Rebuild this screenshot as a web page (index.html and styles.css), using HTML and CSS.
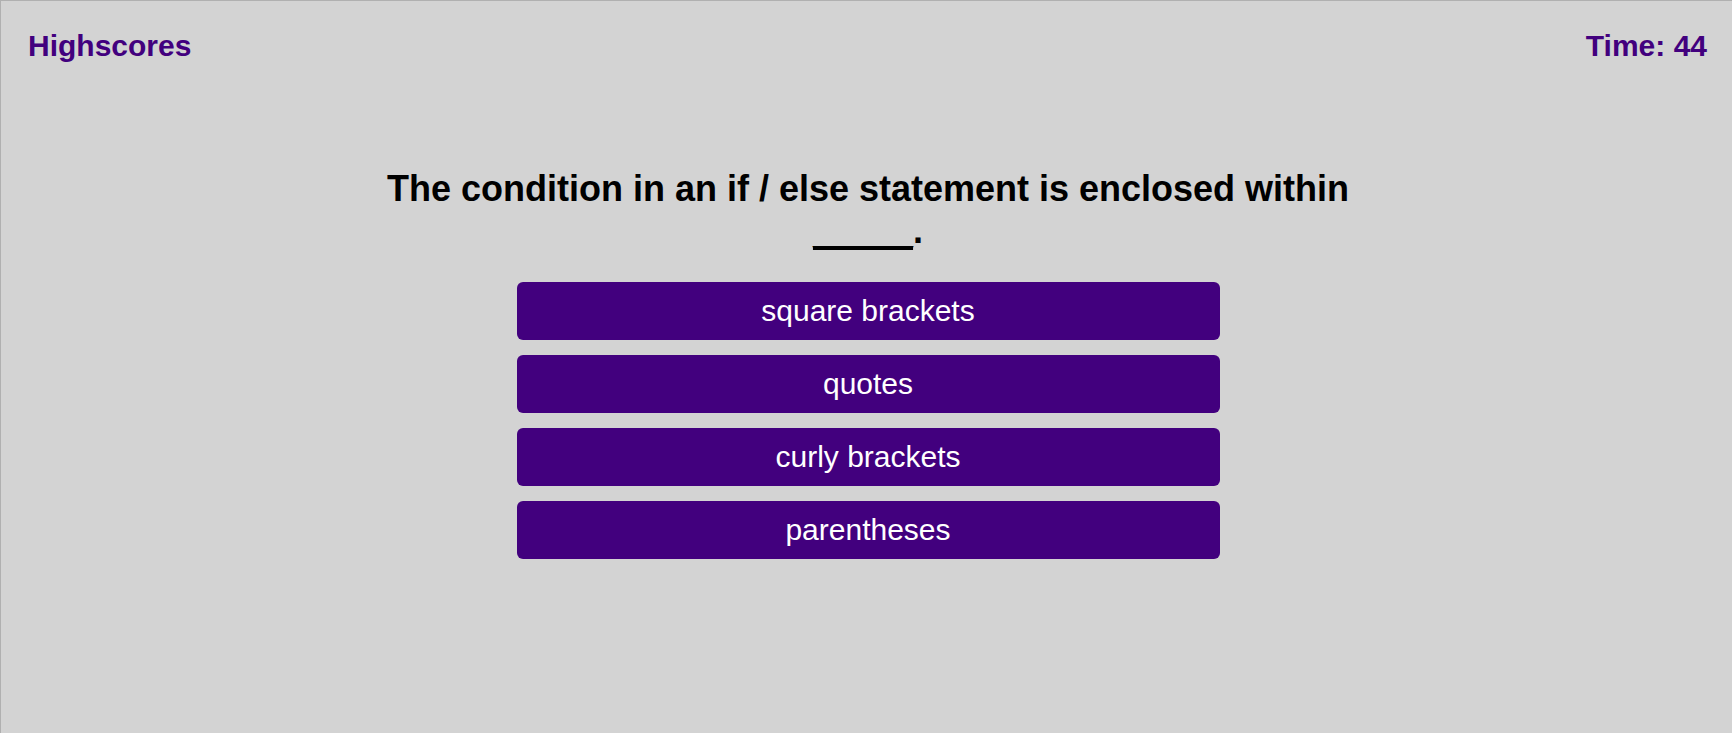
FILE: index.html
```
<!DOCTYPE html>
<html lang="en">
<head>
<meta charset="utf-8">
<meta name="viewport" content="width=device-width, initial-scale=1">
<title>Code Quiz</title>
<link rel="stylesheet" href="styles.css">
</head>
<body>
<header class="topbar">
<a class="scores-link" href="#highscores">Highscores</a>
<div class="timer">Time: <span>44</span></div>
</header>
<main class="quiz">
<h1 class="question">The condition in an if / else statement is enclosed within <span class="blank">_____</span>.</h1>
<div class="choices">
<button class="choice" type="button">square brackets</button>
<button class="choice" type="button">quotes</button>
<button class="choice" type="button">curly brackets</button>
<button class="choice" type="button">parentheses</button>
</div>
</main>
</body>
</html>
```
FILE: styles.css
```
* {
  box-sizing: border-box;
}

body {
  margin: 0;
  min-height: 100vh;
  border-top: 1px solid #b0b0b0;
  border-left: 1px solid #b0b0b0;
  background: #d3d3d3;
  color: #000;
  font-family: "Liberation Sans", Arial, sans-serif;
}

.topbar {
  display: flex;
  justify-content: space-between;
  padding: 25px 25px 0 27px;
  color: #42007e;
  font-size: 30px;
  font-weight: bold;
  line-height: 40px;
}

.scores-link {
  color: inherit;
  text-decoration: none;
}

.quiz {
  padding: 102px 0 0 3px;
  text-align: center;
}

.question {
  max-width: 1004px;
  margin: 0 auto 30px;
  font-size: 36px;
  line-height: 42px;
}

.blank {
  text-decoration: underline;
  text-decoration-skip-ink: none;
  text-decoration-thickness: 4px;
  text-underline-offset: 3px;
}

.choices {
  display: flex;
  flex-direction: column;
  gap: 15px;
  max-width: 703px;
  margin: 0 auto;
}

.choice {
  padding: 9px 20px;
  border: 0;
  border-radius: 6px;
  background: #42007e;
  color: #fff;
  font: inherit;
  font-size: 30px;
  line-height: 40px;
  cursor: pointer;
}
```
